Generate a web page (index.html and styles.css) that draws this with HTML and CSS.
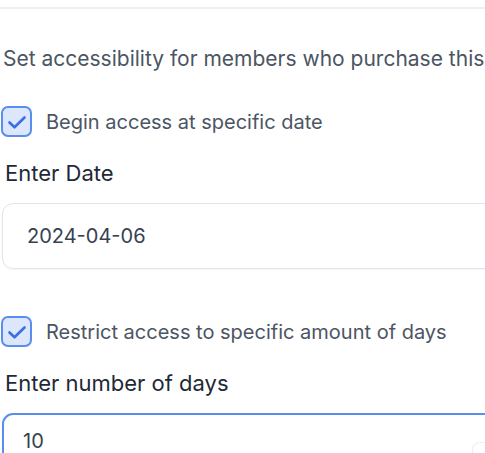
FILE: index.html
```html
<!DOCTYPE html>
<html>
<head>
<meta charset="utf-8">
<link rel="stylesheet" href="styles.css">
</head>
<body>
<div class="page">
  <div class="divider"></div>
  <p class="desc">Set accessibility for members who purchase this offering</p>

  <label class="check-row first">
    <span class="box"><svg viewBox="0 0 24 24" width="24" height="24"><path d="M4.5 12.5l5 4.8L19.5 7.5" fill="none" stroke="#3b6fe0" stroke-width="2.6" stroke-linecap="round" stroke-linejoin="round"/></svg></span>
    <span class="check-label">Begin access at specific date</span>
  </label>

  <div class="field-label">Enter Date</div>
  <div class="input">2024-04-06</div>

  <label class="check-row second">
    <span class="box"><svg viewBox="0 0 24 24" width="24" height="24"><path d="M4.5 12.5l5 4.8L19.5 7.5" fill="none" stroke="#3b6fe0" stroke-width="2.6" stroke-linecap="round" stroke-linejoin="round"/></svg></span>
    <span class="check-label">Restrict access to specific amount of days</span>
  </label>

  <div class="field-label">Enter number of days</div>
  <div class="input focus"><span class="num">10</span><span class="spin"></span></div>
</div>
</body>
</html>
```
FILE: styles.css
```css
html, body {
  margin: 0;
  padding: 0;
  background: #ffffff;
  overflow: hidden;
}
.page {
  width: 560px;
  font-family: Inter, "Noto Sans", sans-serif;
  padding-top: 7px;
}
.divider {
  height: 2px;
  background: #efefef;
}
.desc {
  margin: 36px 0 0 3px;
  font-size: 21px;
  line-height: 28px;
  color: #4b5563;
  white-space: nowrap;
}
.check-row {
  display: flex;
  align-items: center;
  gap: 14px;
  margin-left: 1px;
}
.check-row.first { margin-top: 33px; }
.check-row.second { margin-top: 47px; }
.box {
  width: 31px;
  height: 31px;
  box-sizing: border-box;
  border: 2px solid #5b8def;
  border-radius: 7px;
  background: #dce6fc;
  display: flex;
  align-items: center;
  justify-content: center;
  flex-shrink: 0;
}
.check-label {
  font-size: 20px;
  line-height: 28px;
  color: #4b5563;
}
.field-label {
  margin: 22px 0 0 5px;
  font-size: 22px;
  line-height: 28px;
  color: #1f2937;
}
.input {
  margin: 16px 0 0 2px;
  height: 66px;
  box-sizing: border-box;
  border: 1px solid #e3e5e8;
  border-radius: 11px;
  padding-left: 24px;
  display: flex;
  align-items: center;
  font-size: 20px;
  color: #374151;
  box-shadow: 0 1px 2px rgba(0,0,0,0.04);
}
.input.focus {
  border: 2px solid #5b8def;
  padding-left: 19px;
  justify-content: space-between;
}
.num {
  margin-top: 12px;
  line-height: 28px;
  align-self: flex-start;
}
.spin {
  width: 85px;
  height: 34px;
  border-left: 1px solid #efefef;
  border-top: 1px solid #efefef;
  border-top-left-radius: 8px;
  align-self: flex-end;
}
```
